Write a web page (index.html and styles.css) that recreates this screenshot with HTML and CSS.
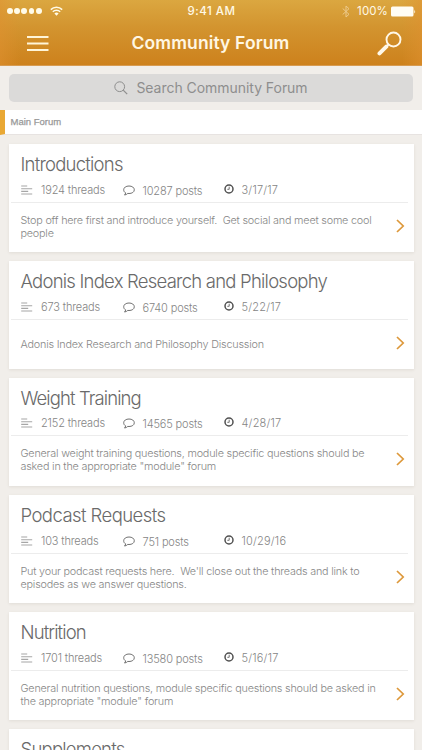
FILE: index.html
```html
<!DOCTYPE html>
<html lang="en">
<head>
<meta charset="utf-8">
<title>Community Forum</title>
<link rel="stylesheet" href="styles.css">
</head>
<body>
<svg class="defs" width="0" height="0" aria-hidden="true">
  <symbol id="lines" viewBox="0 0 12 10"><path d="M.2 1h6M.2 3.700h11M.2 6.400h7M.2 9h11" stroke="#a6a6a6" stroke-width="1.100"/></symbol>
  <symbol id="bubble" viewBox="0 0 12 11"><path d="M6 1C9 1 11.300 2.500 11.300 4.800S9 8.500 6 8.500L4.800 8.400C3.900 9.300 2.800 9.900 1.500 10c.7-.6 1.100-1.300 1.100-2.200C1.300 7.200.7 6.100.7 4.800.7 2.500 3 1 6 1Z" fill="none" stroke="#707070" stroke-width="1"/></symbol>
  <symbol id="clock" viewBox="0 0 10 10"><circle cx="5" cy="5" r="4" fill="none" stroke="#505050" stroke-width="1.500"/><path d="M5.200 2.700v2.600H3.300" fill="none" stroke="#505050" stroke-width=".8"/></symbol>
  <symbol id="chevron" viewBox="0 0 9 14"><path d="M1 1 7.200 7 1 13" fill="none" stroke="#dd983a" stroke-width="1.700"/></symbol>
</svg>
<div class="screen">
  <header class="top">
    <div class="status">
      <div class="signal"><i></i><i></i><i></i><i></i><i></i>
        <svg class="wifi" width="13" height="10" viewBox="0 0 13 10"><path d="M.8 3.600a8.200 8.200 0 0 1 11.400 0M2.800 5.800a5.300 5.300 0 0 1 7.400 0" fill="none" stroke="#fffbe8" stroke-width="1.500"/><path d="M4.400 7.600a3 3 0 0 1 4.200 0L6.500 9.800Z" fill="#fffbe8"/></svg>
      </div>
      <div class="time">9:41 AM</div>
      <div class="power">
        <svg width="8" height="13" viewBox="0 0 8 13"><path d="M.7 3.500 7 9.300 4 12V1l3 2.700L.7 9.500" fill="none" stroke="#ecc98b" stroke-width="1"/></svg>
        <span>100%</span>
        <svg width="25" height="11" viewBox="0 0 25 11"><rect x="0" y=".5" width="22.500" height="10" rx="1.500" fill="#fffdf4"/><path d="M23.300 3.500q1.500 2 0 4Z" fill="#fffdf4"/></svg>
      </div>
    </div>
    <div class="nav">
      <svg width="22" height="17" viewBox="0 0 22 17"><path d="M0 2h21.500M0 8.500h21.500M0 15h21.500" stroke="#fff5d8" stroke-width="2"/></svg>
      <h1>Community Forum</h1>
      <svg width="25" height="25" viewBox="0 0 25 25"><circle cx="16.500" cy="8.500" r="7" fill="none" stroke="#fff8e8" stroke-width="1.900"/><path d="m11.500 13.500-1.500 1.500" stroke="#fff8e8" stroke-width="2"/><path d="m9.300 15.700-6.800 6.700" stroke="#fff8e8" stroke-width="4" stroke-linecap="round"/></svg>
    </div>
  </header>
  <div class="search">
    <svg width="14" height="14" viewBox="0 0 14 14"><circle cx="5.700" cy="5.700" r="4.900" fill="none" stroke="#8e8e8e" stroke-width="1"/><path d="m9.200 9.200 4 4" stroke="#8e8e8e" stroke-width="1.200"/></svg>
    <span>Search Community Forum</span>
  </div>
  <div class="section">Main Forum</div>
  <main class="list">
    <article class="card">
      <div class="head"><h2 class="snug">Introductions</h2>
        <div class="meta"><span class="threads"><svg><use href="#lines"/></svg>1924 threads</span><span class="posts"><svg><use href="#bubble"/></svg>10287 posts</span><span class="date"><svg><use href="#clock"/></svg>3/17/17</span></div></div>
      <div class="body"><p>Stop off here first and introduce yourself.&nbsp; Get social and meet some cool<br>people</p><svg><use href="#chevron"/></svg></div>
    </article>
    <article class="card">
      <div class="head"><h2 class="snug">Adonis Index Research and Philosophy</h2>
        <div class="meta"><span class="threads"><svg><use href="#lines"/></svg>673 threads</span><span class="posts"><svg><use href="#bubble"/></svg>6740 posts</span><span class="date"><svg><use href="#clock"/></svg>5/22/17</span></div></div>
      <div class="body"><p>Adonis Index Research and Philosophy Discussion</p><svg><use href="#chevron"/></svg></div>
    </article>
    <article class="card compact">
      <div class="head"><h2 class="tight">Weight Training</h2>
        <div class="meta"><span class="threads"><svg><use href="#lines"/></svg>2152 threads</span><span class="posts"><svg><use href="#bubble"/></svg>14565 posts</span><span class="date"><svg><use href="#clock"/></svg>4/28/17</span></div></div>
      <div class="body"><p>General weight training questions, module specific questions should be<br>asked in the appropriate "module" forum</p><svg><use href="#chevron"/></svg></div>
    </article>
    <article class="card">
      <div class="head"><h2>Podcast Requests</h2>
        <div class="meta"><span class="threads"><svg><use href="#lines"/></svg>103 threads</span><span class="posts"><svg><use href="#bubble"/></svg>751 posts</span><span class="date"><svg><use href="#clock"/></svg>10/29/16</span></div></div>
      <div class="body"><p>Put your podcast requests here.&nbsp; We'll close out the threads and link to<br>episodes as we answer questions.</p><svg><use href="#chevron"/></svg></div>
    </article>
    <article class="card">
      <div class="head"><h2 class="tight">Nutrition</h2>
        <div class="meta"><span class="threads"><svg><use href="#lines"/></svg>1701 threads</span><span class="posts"><svg><use href="#bubble"/></svg>13580 posts</span><span class="date"><svg><use href="#clock"/></svg>5/16/17</span></div></div>
      <div class="body"><p>General nutrition questions, module specific questions should be asked in<br>the appropriate "module" forum</p><svg><use href="#chevron"/></svg></div>
    </article>
    <article class="card">
      <div class="head"><h2 class="snug">Supplements</h2></div>
    </article>
  </main>
</div>
</body>
</html>
```
FILE: styles.css
```css
* { box-sizing: border-box; }
body { margin: 0; font-family: Inter, "Liberation Sans", sans-serif; background: #f1eeea; }
h1, h2, p { margin: 0; }
svg { display: block; flex: none; }
.defs { display: none; }
.screen { width: 422px; height: 750px; overflow: hidden; background: #f1eeea; }
.top {
  height: 66px;
  border-bottom: 1px solid #d79b51;
  background:
    linear-gradient(90deg, rgba(224,145,48,.55), transparent 20px, transparent 402px, rgba(224,145,48,.55)),
    linear-gradient(#dba740, #d39530 40%, #cd811c);
}
.status { height: 21px; display: grid; grid-template-columns: 1fr auto 1fr; align-items: center; padding: 1px 6px 0 7px; color: #fff9e6; font-size: 11.5px; }
.signal { display: flex; align-items: center; gap: 1.4px; }
.signal i { width: 5.8px; height: 5.8px; border-radius: 50%; background: #fffbe8; }
.wifi { margin-left: 7px; }
.time { font-weight: 500; letter-spacing: .5px; }
.power { display: flex; align-items: center; justify-content: flex-end; gap: 3px; }
.power span { margin-left: 4px; letter-spacing: .1px; }
.nav { height: 44px; display: flex; align-items: center; justify-content: space-between; padding: 0 20px 0 27px; }
.nav h1 { font-size: 17.5px; font-weight: 600; line-height: 22px; color: #fff7e3; letter-spacing: .12px; margin-right: 5px; }
.search { margin: 8px 9px 0; height: 28px; border-radius: 5px; background: #dbdad9; display: flex; align-items: center; justify-content: center; gap: 8px; padding-bottom: 1px; font-size: 14px; letter-spacing: -.04px; color: #8e8e8e; }
.section { margin-top: 8px; height: 25px; border-left: 5px solid #e9a834; border-bottom: 1px solid #e7e3e1; background: #fff; padding-left: 5.5px; font: 9.5px/24px "Liberation Sans", sans-serif; color: #989898; -webkit-text-stroke: .25px #989898; }
.list { padding: 9px 8.5px 0 9px; display: flex; flex-direction: column; gap: 9px; }
.card { height: 108px; background: #fff; box-shadow: 0 1px 3px rgba(90,70,50,.1); flex: none; }
.head { height: 59px; margin: 0 6px 0 2px; padding: 8px 0 0 9.5px; border-bottom: 1px solid #ececec; }
.head h2 { font-size: 18.5px; font-weight: 300; line-height: 24px; color: #6a6a6a; white-space: nowrap; letter-spacing: -.56px; }
.head .snug { letter-spacing: -.77px; }
.head .tight { letter-spacing: -.9px; }
.meta { display: grid; grid-template-columns: 102px 101px 1fr; margin-top: 7px; font-size: 11px; font-weight: 300; line-height: 14px; color: #858585; letter-spacing: -.15px; }
.meta span { display: flex; align-items: center; height: 14px; }
.threads svg { width: 12px; height: 10px; margin: 0 8.5px 1px 0; }
.posts { padding-top: 1px; }
.posts svg { width: 12px; height: 11px; margin: 0 8px 1px 0; }
.date { letter-spacing: .2px; }
.date svg { width: 10px; height: 10px; margin: 0 8px 3px 0; }
.body { height: 49px; display: flex; align-items: center; justify-content: space-between; padding: 0 9px 3px 11.5px; }
.body p { font-size: 10.8px; font-weight: 300; line-height: 13px; color: #878787; white-space: nowrap; letter-spacing: -.2px; padding-top: 2px; }
.body svg { width: 9px; height: 14px; }
.compact .head { height: 58px; }
.compact .meta { margin-top: 6px; }
.compact .body { height: 50px; padding-bottom: 4px; }
```
